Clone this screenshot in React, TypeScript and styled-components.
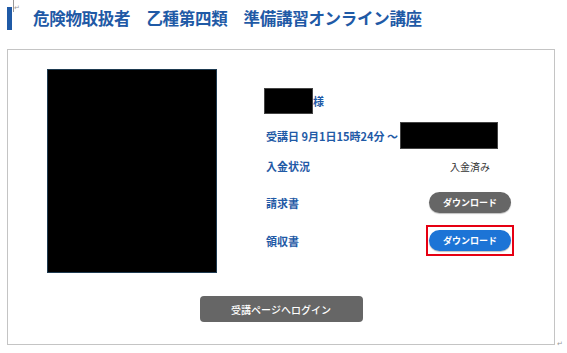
import React from "react";
import styled, { createGlobalStyle } from "styled-components";

const Global = createGlobalStyle`
  html, body { margin: 0; padding: 0; background: #fff; }
  body { font-family: "Noto Sans CJK JP", "Noto Sans", sans-serif; }
`;

const Page = styled.div`
  position: relative;
  width: 567px;
  height: 353px;
  padding: 0 12px 0 7px;
  box-sizing: border-box;
  overflow: hidden;
`;

const Header = styled.header`
  display: flex;
  align-items: center;
  height: 49px;
  padding-bottom: 12px;
  box-sizing: border-box;
`;

const Bar = styled.span`
  width: 5px;
  height: 23px;
  background: #1f5aa6;
  flex: none;
`;

const Title = styled.h1`
  margin: 0 0 0 21px;
  font-size: 16.5px;
  font-weight: 700;
  color: #1f5aa6;
  letter-spacing: -0.3px;
  white-space: pre;
  line-height: 1;
`;

const Card = styled.section`
  width: 548px;
  height: 296px;
  box-sizing: border-box;
  border: 1px solid #c4c4c4;
  padding: 19px 0 0 0;
  display: flex;
  flex-direction: column;
  align-items: center;
`;

const Top = styled.div`
  align-self: stretch;
  display: flex;
  padding-left: 39px;
`;

const Photo = styled.div`
  width: 170px;
  height: 204px;
  box-sizing: border-box;
  background: #000;
  border: 1px solid #1e3a50;
  flex: none;
`;

const Info = styled.div`
  margin-left: 47px;
  padding-top: 19px;
  display: flex;
  flex-direction: column;
  width: 247px;
`;

const Row = styled.div<{ $h: number; $mt: number }>`
  display: flex;
  align-items: center;
  height: ${(p) => p.$h}px;
  margin-top: ${(p) => p.$mt}px;
`;

const Label = styled.span`
  font-size: 11px;
  font-weight: 700;
  color: #1f5aa6;
  padding-left: 2px;
  flex: 1;
  white-space: nowrap;
`;

const Redact = styled.span<{ $w: number; $h: number }>`
  display: inline-block;
  width: ${(p) => p.$w}px;
  height: ${(p) => p.$h}px;
  background: #000;
  border: 1px solid #444;
  box-sizing: border-box;
  flex: none;
`;

const Suffix = styled.span`
  font-size: 11px;
  font-weight: 700;
  color: #1f5aa6;
`;

const DateText = styled.span`
  font-size: 11px;
  font-weight: 700;
  color: #1f5aa6;
  padding-left: 2px;
  margin-right: 2px;
  white-space: nowrap;
`;

const ValueCell = styled.div`
  width: 82px;
  display: flex;
  justify-content: center;
  flex: none;
`;

const Plain = styled.span`
  font-size: 10px;
  color: #333;
`;

const Pill = styled.button<{ $tone: "grey" | "blue"; $marked?: boolean }>`
  position: relative;
  width: 82px;
  height: 21px;
  border: none;
  border-radius: 11px;
  background: ${(p) => (p.$tone === "blue" ? "#1c74d6" : "#666666")};
  color: #fff;
  font-family: inherit;
  font-size: 9px;
  font-weight: 700;
  padding: 0;
  cursor: pointer;
  box-shadow: 0 1px 1px rgba(0, 0, 0, 0.25);
  &::after {
    content: "";
    display: ${(p) => (p.$marked ? "block" : "none")};
    position: absolute;
    inset: -5px -3px;
    border: 2px solid #e60012;
    pointer-events: none;
  }
`;

const LoginButton = styled.button`
  margin-top: 23px;
  width: 163px;
  height: 26px;
  border: none;
  border-radius: 4px;
  background: #666666;
  color: #fff;
  font-family: inherit;
  font-size: 10px;
  font-weight: 500;
  padding: 0;
  cursor: pointer;
`;

const Mark = styled.span<{ $x: number; $y: number }>`
  position: absolute;
  left: ${(p) => p.$x}px;
  top: ${(p) => p.$y}px;
  font-family: "DejaVu Sans", sans-serif;
  font-size: 7px;
  line-height: 1;
  color: #999;
`;

const Caret = styled.span`
  position: absolute;
  left: 13px;
  top: 0;
  width: 1px;
  height: 12px;
  background: #999;
`;

export default function App() {
  return (
    <>
      <Global />
      <Page>
        <Caret />
        <Mark $x={14} $y={5}>↵</Mark>
        <Header>
          <Bar />
          <Title>危険物取扱者　乙種第四類　準備講習オンライン講座</Title>
        </Header>
        <Card>
          <Top>
            <Photo />
            <Info>
              <Row $h={26} $mt={0}>
                <Redact $w={49} $h={26} />
                <Suffix>様</Suffix>
              </Row>
              <Row $h={27} $mt={8}>
                <DateText>受講日 9月1日15時24分 ～</DateText>
                <Redact $w={98} $h={27} />
              </Row>
              <Row $h={20} $mt={7}>
                <Label>入金状況</Label>
                <ValueCell>
                  <Plain>入金済み</Plain>
                </ValueCell>
              </Row>
              <Row $h={21} $mt={16}>
                <Label>請求書</Label>
                <ValueCell>
                  <Pill $tone="grey">ダウンロード</Pill>
                </ValueCell>
              </Row>
              <Row $h={21} $mt={17}>
                <Label>領収書</Label>
                <ValueCell>
                  <Pill $tone="blue" $marked>
                    ダウンロード
                  </Pill>
                </ValueCell>
              </Row>
            </Info>
          </Top>
          <LoginButton>受講ページへログイン</LoginButton>
        </Card>
        <Mark $x={557} $y={341}>↵</Mark>
      </Page>
    </>
  );
}
